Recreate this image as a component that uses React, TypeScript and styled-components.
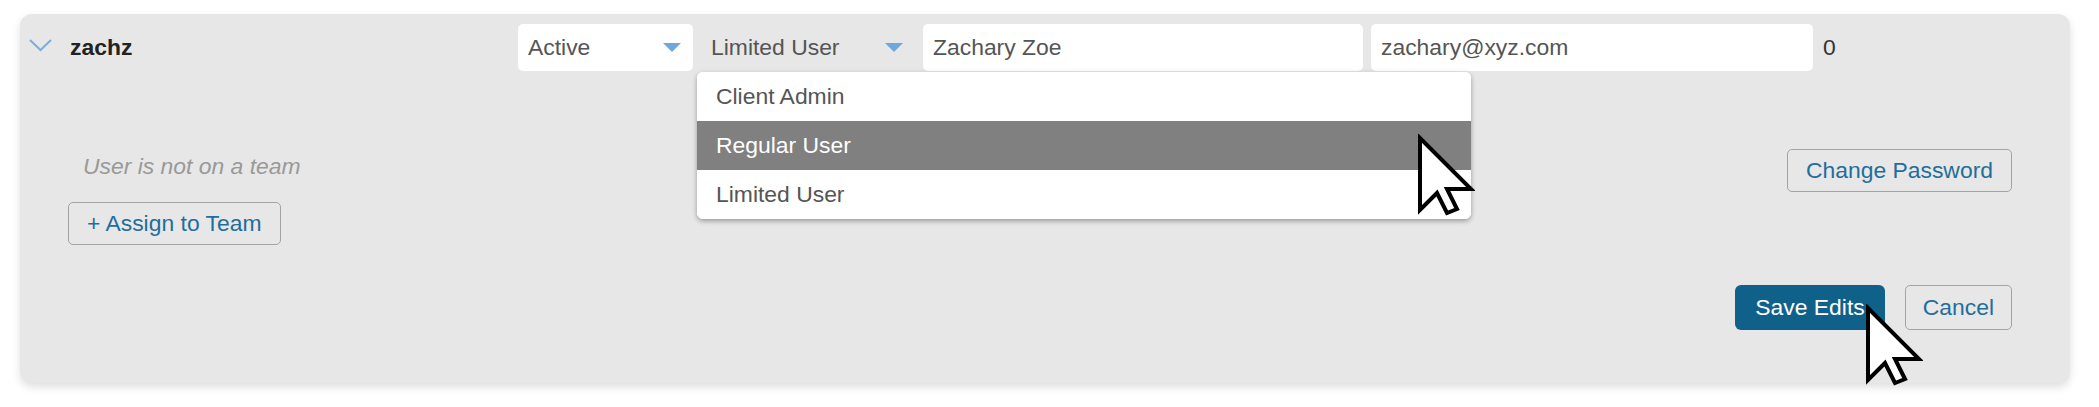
import React from 'react'
import styled, { createGlobalStyle } from 'styled-components'

const GlobalStyle = createGlobalStyle`
  html, body {
    margin: 0;
    padding: 0;
    background: #ffffff;
  }
  body {
    font-family: "Liberation Sans", Arial, sans-serif;
    font-size: 22.9px;
    color: #333;
  }
`

const Panel = styled.div`
  position: relative;
  margin: 14px 29px 25px 20px;
  padding: 10px 58px 53px 9px;
  background: #e7e7e7;
  border-radius: 12px;
  box-shadow: 0 4px 8px rgba(0, 0, 0, 0.13);
`

const HeaderRow = styled.div`
  display: flex;
  align-items: center;
  height: 47px;
  gap: 4px;
`

const NameCell = styled.div`
  display: flex;
  align-items: center;
  width: 485px;
`

const Chevron = styled.svg`
  width: 23px;
  height: 13px;
  margin-right: 18px;
  margin-top: -5px;
`

const Username = styled.span`
  font-weight: bold;
  color: #222;
`

const SelectBox = styled.div<{ $width: number; $filled?: boolean; $pad: number }>`
  position: relative;
  display: flex;
  align-items: center;
  justify-content: space-between;
  box-sizing: border-box;
  width: ${(p) => p.$width}px;
  height: 47px;
  padding: 0 ${(p) => p.$pad + 2}px 0 ${(p) => p.$pad}px;
  background: ${(p) => (p.$filled ? '#ffffff' : 'transparent')};
  border-radius: 5px;
  color: #555;
`

const Caret = styled.span`
  width: 0;
  height: 0;
  border-left: 9px solid transparent;
  border-right: 9px solid transparent;
  border-top: 9px solid #6fa8dc;
`

const TextInput = styled.div<{ $width: number; $offset?: number }>`
  display: flex;
  align-items: center;
  box-sizing: border-box;
  width: ${(p) => p.$width}px;
  height: 47px;
  margin-left: ${(p) => p.$offset ?? 0}px;
  padding: 0 10px;
  background: #ffffff;
  border-radius: 5px;
  color: #555;
`

const Count = styled.span`
  margin-left: 6px;
  color: #333;
`

const Menu = styled.ul`
  position: absolute;
  top: 48px;
  left: 0;
  z-index: 2;
  width: 774px;
  margin: 0;
  padding: 0;
  list-style: none;
  background: #ffffff;
  border-radius: 6px;
  box-shadow: 0 2px 5px rgba(0, 0, 0, 0.35);
  overflow: hidden;
`

const MenuItem = styled.li<{ $active?: boolean }>`
  display: flex;
  align-items: center;
  height: 49px;
  padding-left: 19px;
  background: ${(p) => (p.$active ? '#808080' : '#ffffff')};
  color: ${(p) => (p.$active ? '#ffffff' : '#555')};
`

const Body = styled.div`
  display: flex;
  justify-content: space-between;
  align-items: flex-start;
  margin-top: 78px;
`

const TeamColumn = styled.div`
  display: flex;
  flex-direction: column;
  align-items: flex-start;
  padding-left: 39px;
  padding-top: 4px;
`

const NoTeam = styled.span`
  margin-left: 15px;
  line-height: 26px;
  font-style: italic;
  color: #999;
`

const OutlineButton = styled.button<{ $top?: number }>`
  box-sizing: border-box;
  height: 43px;
  margin-top: ${(p) => p.$top ?? 0}px;
  padding: 0 18px;
  font: inherit;
  color: #1f6e9b;
  background: transparent;
  border: 1.5px solid #a3a3a3;
  border-radius: 5px;
`

const Footer = styled.div`
  display: flex;
  justify-content: flex-end;
  gap: 20px;
  margin-top: 40px;
`

const PrimaryButton = styled.button`
  box-sizing: border-box;
  height: 45px;
  padding: 0 20px;
  font: inherit;
  color: #ffffff;
  background: #10618a;
  border: none;
  border-radius: 6px;
`

const FooterButton = styled(OutlineButton)`
  height: 45px;
  padding: 0 17px;
`

const Pointer = styled.svg<{ $x: number; $y: number }>`
  position: absolute;
  left: ${(p) => p.$x - 3}px;
  top: ${(p) => p.$y - 4}px;
  z-index: 3;
  width: 58px;
  height: 84px;
  pointer-events: none;
`

const PointerIcon = ({ x, y }: { x: number; y: number }) => (
  <Pointer $x={x} $y={y} viewBox="0 0 58 84">
    <path
      d="M3 4 L3 76 L20 59 L30 79 L40 75 L30 55 L54 55 Z"
      fill="#ffffff"
      stroke="#000000"
      strokeWidth="4"
      strokeLinejoin="miter"
    />
  </Pointer>
)

const roles = ['Client Admin', 'Regular User', 'Limited User']

export default function App() {
  return (
    <>
      <GlobalStyle />
      <Panel>
        <HeaderRow>
          <NameCell>
            <Chevron viewBox="0 0 23 13">
              <path d="M1 1 L11.5 11 L22 1" fill="none" stroke="#7aaedf" strokeWidth="2" />
            </Chevron>
            <Username>zachz</Username>
          </NameCell>
          <SelectBox $width={175} $filled $pad={10}>
            Active
            <Caret />
          </SelectBox>
          <SelectBox $width={222} $pad={14}>
            Limited User
            <Caret />
            <Menu>
              {roles.map((r) => (
                <MenuItem key={r} $active={r === 'Regular User'}>
                  {r}
                </MenuItem>
              ))}
            </Menu>
          </SelectBox>
          <TextInput $width={440}>Zachary Zoe</TextInput>
          <TextInput $width={442} $offset={4}>zachary@xyz.com</TextInput>
          <Count>0</Count>
        </HeaderRow>
        <Body>
          <TeamColumn>
            <NoTeam>User is not on a team</NoTeam>
            <OutlineButton $top={23}>+ Assign to Team</OutlineButton>
          </TeamColumn>
          <OutlineButton>Change Password</OutlineButton>
        </Body>
        <Footer>
          <PrimaryButton>Save Edits</PrimaryButton>
          <FooterButton>Cancel</FooterButton>
        </Footer>
        <PointerIcon x={1400} y={124} />
        <PointerIcon x={1848} y={294} />
      </Panel>
    </>
  )
}
